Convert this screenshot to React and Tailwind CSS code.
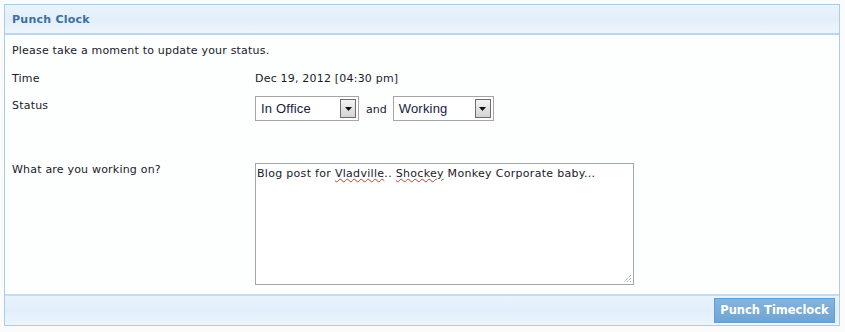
export default function App() {
  const font = { fontFamily: '"DejaVu Sans", Verdana, sans-serif' };
  const Select = ({ value, w }) => (
    <div className={`flex items-center justify-between h-[25px] ${w} border border-[#a5a5a5] bg-white pl-[5px] pr-[2px]`}>
      <span className="text-[13px] text-[#1a1a3a]" style={{ fontFamily: '"Liberation Sans", Arial, sans-serif' }}>{value}</span>
      <span className="flex items-center justify-center w-[16px] h-[19px] border border-[#6d6d6d] bg-gradient-to-b from-[#f4f4f4] to-[#d4d4d4]">
        <svg width="7" height="4" viewBox="0 0 7 4"><path d="M0 0h7L3.5 4z" fill="#111" /></svg>
      </span>
    </div>
  );
  return (
    <div className="w-[845px] h-[332px] bg-[#fbfbfb] pt-[4px] pl-[4px]" style={font}>
      <div className="w-[836px] h-[322px] border border-[#a9cde6] flex flex-col bg-[#fdfefe]">
        <div className="h-[30px] border-b-2 border-[#b8d6ee] bg-gradient-to-b from-[#eaf4fd] via-[#e2eefa] to-[#eef6fd] flex items-center pl-[7px] pt-[3px]">
          <span className="text-[11px] font-bold text-[#3c6e9f] tracking-[0.25px]">Punch Clock</span>
        </div>
        <div className="flex-1 flex flex-col pl-[7px] text-[11px] text-[#1a1a2a] tracking-[0.2px]">
          <div className="h-[28px] flex items-center pt-[5px]">Please take a moment to update your status.</div>
          <div className="h-[28px] flex items-center pt-[4px]">
            <div className="w-[243px]">Time</div>
            <div>Dec 19, 2012 [04:30 pm]</div>
          </div>
          <div className="flex h-[66px]">
            <div className="w-[243px] pt-[7px]">Status</div>
            <div className="flex items-start pt-[5px]">
              <Select value="In Office" w="w-[104px]" />
              <span className="mt-[6px] ml-[7px] mr-[6px] tracking-normal">and</span>
              <Select value="Working" w="w-[101px]" />
            </div>
          </div>
          <div className="flex h-[135px] pt-[6px]">
            <div className="w-[243px] -mt-[1px]">What are you working on?</div>
            <div className="relative w-[379px] h-[122px] border border-[#a5a5a5] bg-white pl-[1px] pt-[2px] tracking-[0.3px]">
              <span>Blog post for <span className="underline decoration-wavy decoration-[#e03030] decoration-1">Vladville</span>.. <span className="underline decoration-wavy decoration-[#e03030] decoration-1">Shockey</span> Monkey Corporate baby...</span>
              <svg className="absolute right-[1px] bottom-[1px]" width="10" height="10" viewBox="0 0 10 10">
                <path d="M9 2L2 9M9 5L5 9M9 8L8 9" stroke="#777" strokeWidth="1" strokeDasharray="1 1" />
              </svg>
            </div>
          </div>
        </div>
        <div className="h-[31px] border-t-2 border-[#c4dcef] bg-gradient-to-b from-[#e9f3fd] via-[#e2eefa] to-[#edf5fd] flex items-center justify-end pr-[4px]">
          <div className="h-[25px] w-[121px] flex items-center justify-center border border-[#5d9fd8] bg-gradient-to-b from-[#85b4dd] to-[#6ea4d3] text-white font-bold text-[11.5px]">Punch Timeclock</div>
        </div>
      </div>
    </div>
  );
}
